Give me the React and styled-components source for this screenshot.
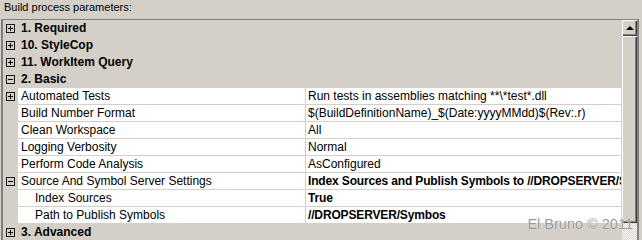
import React from "react";
import styled, { createGlobalStyle } from "styled-components";

const GlobalStyle = createGlobalStyle`
  html, body {
    margin: 0;
    padding: 0;
    width: 642px;
    height: 240px;
    overflow: hidden;
    background: #d4d0c8;
    font-family: "Liberation Sans", Arial, sans-serif;
    font-size: 12px;
    color: #000;
  }
`;

const rows = [
  { type: "group", name: "1. Required", open: false },
  { type: "group", name: "10. StyleCop", open: false },
  { type: "group", name: "11. WorkItem Query", open: false },
  { type: "group", name: "2. Basic", open: true },
  { name: "Automated Tests", value: "Run tests in assemblies matching **\\*test*.dll", toggle: "plus" },
  { name: "Build Number Format", value: "$(BuildDefinitionName)_$(Date:yyyyMMdd)$(Rev:.r)" },
  { name: "Clean Workspace", value: "All" },
  { name: "Logging Verbosity", value: "Normal" },
  { name: "Perform Code Analysis", value: "AsConfigured" },
  {
    name: "Source And Symbol Server Settings",
    value: "Index Sources and Publish Symbols to //DROPSERVER/Symbos",
    toggle: "minus",
    bold: true,
  },
  { name: "Index Sources", value: "True", bold: true, sub: true },
  { name: "Path to Publish Symbols", value: "//DROPSERVER/Symbos", bold: true, sub: true },
  { type: "group", name: "3. Advanced", open: false },
];

const Toggle = ({ open }) => (
  <svg width="9" height="9" viewBox="0 0 9 9">
    <rect x="0.5" y="0.5" width="8" height="8" fill="none" stroke="#1a1a1a" />
    <line x1="2" y1="4.5" x2="7" y2="4.5" stroke="#000" />
    {!open && <line x1="4.5" y1="2" x2="4.5" y2="7" stroke="#000" />}
  </svg>
);

const App = () => {
  return (
    <Page>
      <GlobalStyle />
      <Caption>Build process parameters:</Caption>
      <Panel>
        <Grid>
          {rows.map((row, i) =>
            row.type === "group" ? (
              <GroupRow key={i}>
                <Gutter>
                  <Toggle open={row.open} />
                </Gutter>
                <GroupName>{row.name}</GroupName>
              </GroupRow>
            ) : (
              <Row key={i}>
                <Gutter>{row.toggle && <Toggle open={row.toggle === "minus"} />}</Gutter>
                <NameCell $sub={row.sub}>{row.name}</NameCell>
                <ValueCell $bold={row.bold}>{row.value}</ValueCell>
              </Row>
            )
          )}
        </Grid>
        <ScrollBar>
          <UpButton>
            <Arrow />
          </UpButton>
          <Thumb />
          <Track />
        </ScrollBar>
      </Panel>
      <Watermark>El Bruno © 2011</Watermark>
    </Page>
  );
};

export default App;

const Page = styled.div`
  position: relative;
  width: 642px;
  height: 240px;
  overflow: hidden;
`;

const Caption = styled.div`
  height: 19px;
  padding-left: 4px;
  font-size: 11px;
  line-height: 15px;
`;

const Panel = styled.div`
  display: flex;
  margin-left: 1px;
  width: 638px;
  height: 260px;
  box-sizing: border-box;
  border-top: 1px solid #808080;
  border-left: 2px solid #808080;
  border-right: 2px solid #808080;
`;

const Grid = styled.div`
  flex: 1;
  display: flex;
  flex-direction: column;
  min-width: 0;
`;

const GroupRow = styled.div`
  display: flex;
  align-items: center;
  height: 17px;
`;

const Row = styled.div`
  display: flex;
  height: 16px;
  margin-bottom: 1px;
`;

const Gutter = styled.div`
  width: 15px;
  flex: none;
  display: flex;
  align-items: center;
  padding-left: 3px;
  box-sizing: border-box;
`;

const GroupName = styled.div`
  padding-left: 3px;
  font-weight: bold;
  line-height: 17px;
  white-space: nowrap;
`;

const NameCell = styled.div`
  width: 287px;
  flex: none;
  background: #fff;
  padding-left: ${(p) => (p.$sub ? "17px" : "3px")};
  box-sizing: border-box;
  line-height: 16px;
  white-space: nowrap;
  overflow: hidden;
`;

const ValueCell = styled.div`
  flex: 1;
  min-width: 0;
  margin-left: 1px;
  background: #fff;
  padding-left: 2px;
  line-height: 16px;
  font-weight: ${(p) => (p.$bold ? "bold" : "normal")};
  letter-spacing: ${(p) => (p.$bold ? "-0.15px" : "0")};
  white-space: nowrap;
  overflow: hidden;
`;

const ScrollBar = styled.div`
  width: 15px;
  flex: none;
  margin-left: 1px;
  display: flex;
  flex-direction: column;
`;

const raised = `
  background: #d4d0c8;
  box-shadow: inset 1px 1px 0 #fff, inset -1px -1px 0 #404040,
    inset -2px -2px 0 #808080;
`;

const UpButton = styled.div`
  height: 16px;
  flex: none;
  display: flex;
  align-items: center;
  justify-content: center;
  ${raised}
`;

const Arrow = styled.div`
  width: 0;
  height: 0;
  border-left: 4px solid transparent;
  border-right: 4px solid transparent;
  border-bottom: 4px solid #000;
  margin-top: -1px;
`;

const Thumb = styled.div`
  height: 187px;
  flex: none;
  ${raised}
`;

const Track = styled.div`
  flex: 1;
  background: conic-gradient(#fff 25%, #d4d0c8 0 50%, #fff 0 75%, #d4d0c8 0) 0 0 / 2px 2px;
`;

const Watermark = styled.div`
  position: absolute;
  right: 9px;
  top: 216px;
  font-size: 14.5px;
  line-height: 17px;
  color: #9a9a9a;
  text-shadow: 0 0 1px #fff;
  white-space: nowrap;
`;
